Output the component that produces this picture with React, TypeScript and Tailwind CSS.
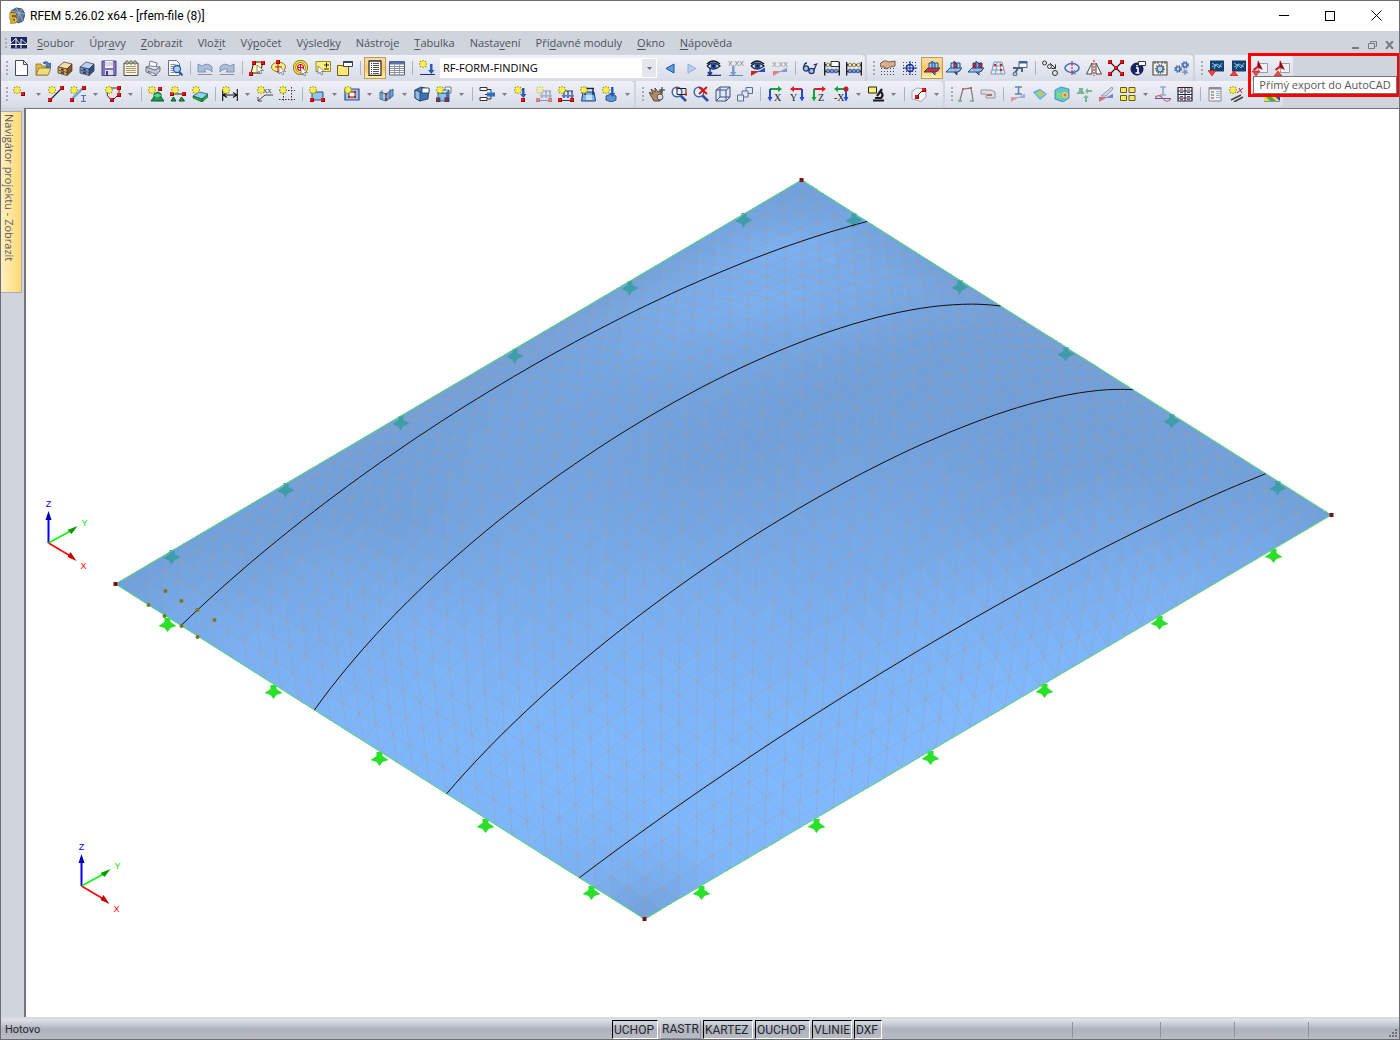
import { ReactNode } from 'react';
import clsx from 'clsx';

// ---------- small icon parts ----------

const Star = ({ x = 0, y = 0 }: { x?: number; y?: number }) => (
  <g transform={`translate(${x} ${y})`}>
    <path d="M4 0v8M0 4h8M1 1l6 6M7 1L1 7" stroke="#a89a10" strokeWidth="1.300" />
    <path d="M4 1v6M1 4h6M2 2l4 4M6 2L2 6" stroke="#fbf344" strokeWidth="1.500" />
  </g>
);

const Dot = ({ x, y, c = '#f01010' }: { x: number; y: number; c?: string }) => (
  <g>
    <rect x={x} y={y} width="4" height="4" fill="#8c0808" />
    <rect x={x} y={y} width="3" height="3" fill={c} />
  </g>
);

const Down = ({ x = 8, y = 1, c = '#2a59b5' }: { x?: number; y?: number; c?: string }) => (
  <path d={`M${x - 1} ${y}h2.5v6h2l-3.2 4-3.2-4h2z`} fill={c} />
);

const Cursor = ({ x = 8, y = 6 }: { x?: number; y?: number }) => (
  <path d={`M${x} ${y}v8l2-2 1.5 3 1.5-1-1.5-2.5h3z`} fill="#fff" stroke="#666" strokeWidth=".7" />
);

const Lens = () => (
  <g>
    <path d="M9 9l6 6" stroke="#2f50a8" strokeWidth="2.600" />
    <circle cx="6" cy="6" r="4.800" fill="#e9f4ff" stroke="#3d63b4" strokeWidth="1.500" />
  </g>
);

const Eye = () => (
  <g>
    <path d="M1 6Q7 0 14 6Q7 12 1 6" fill="#fff" stroke="#1b2340" strokeWidth="1.300" />
    <circle cx="7.500" cy="6" r="3" fill="#22539f" />
    <circle cx="7.500" cy="6" r="1.200" fill="#05102c" />
    <path d="M1 4Q7 -2 14 4" stroke="#101522" strokeWidth="1.300" fill="none" />
  </g>
);

const Grid = () => (
  <path d="M1 2.500h14M1 5.500h14M1 8.500h14M1 11.500h14M1 14.500h14" stroke="#3c4252" strokeDasharray="1 2" />
);

const Cabinet = ({ a, b, c }: { a: string; b: string; c: string }) => (
  <g stroke="#3a3530" strokeWidth=".7">
    <path d="M1 7l6-5 8 2-5 5z" fill={a} />
    <path d="M10 9l5-5v7l-5 4.500z" fill={c} />
    <path d="M1 7l9 2v6.500L1 13z" fill={b} />
    <path d="M1 10l9 2.500" />
    <path d="M4 9.300l3 .8M4 12.500l3 .8" strokeWidth="1.500" />
  </g>
);

// three crossed work planes, the chosen one is red
const Planes = ({ on }: { on: number }) => (
  <g strokeWidth=".9" stroke="#123f7a">
    <path d="M5 3h9v8H5z" fill={on === 2 ? '#f01616' : '#a5d4f7'} />
    <path d="M8 1l3 3v11l-3-3z" fill={on === 1 ? '#f01616' : '#6fb4ea'} fillOpacity=".9" />
    <path d="M0 12l4-4h12l-4 4z" fill={on === 0 ? '#f01616' : '#9bcdf4'} fillOpacity=".85" />
  </g>
);

const Slope = ({ dim }: { dim?: boolean }) => (
  <g opacity={dim ? 0.5 : 1}>
    <path d="M1 11h8l-8 4.500z" fill="#e01b24" />
    <path d="M15 12H8l7-4z" fill="#2347d8" />
    <path d="M1 15.500l14-7.500" stroke="#333" strokeWidth=".5" />
  </g>
);

const Loads = () => (
  <g>
    <path d="M5 5h10M2 14.500h13" stroke="#203c7b" strokeWidth="1.200" />
    <path d="M6 5v6M10 5v6M14 5v6" stroke="#203c7b" strokeWidth="1.200" />
    <path d="M4 9l2 3 2-3M8 9l2 3 2-3M12 9l2 3 2-3" fill="none" stroke="#3f63b8" />
    <Dot x={0} y={12} />
    <Dot x={12} y={12} />
    <Star />
  </g>
);

const Abacus = ({ card }: { card?: boolean }) => (
  <g>
    <path d="M.700 2v13.500M15.300 2v13.500M1 5h14M1 11.500h14" stroke="#15161a" strokeWidth="1.300" />
    <g fill="#f2e8a4" stroke="#574f24" strokeWidth=".6">
      <circle cx="4" cy="5" r="1.800" />
      <circle cx="8" cy="5" r="1.800" />
      <circle cx="12.500" cy="5" r="1.800" />
    </g>
    <g fill="#7998df" stroke="#1f356f" strokeWidth=".6">
      <circle cx="4" cy="11" r="1.900" />
      <circle cx="8" cy="11" r="1.900" />
      <circle cx="12" cy="11" r="1.900" />
    </g>
    {card && <path d="M7 1.500h8v5H7z" fill="#fff" stroke="#333" />}
  </g>
);

const ViewAxis = ({ t, h, v, flip }: { t: string; h: string; v: string; flip?: boolean }) => (
  <g>
    {flip ? (
      <g>
        <path d="M13 3H5" stroke={h} strokeWidth="2" />
        <path d="M5 0L1 3l4 3z" fill={h} />
        <path d="M13 3v8" stroke={v} strokeWidth="2" />
        <path d="M10.500 11h5L13 15.500z" fill={v} />
      </g>
    ) : (
      <g>
        <path d="M3 3h8" stroke={h} strokeWidth="2" />
        <path d="M11 0l4 3-4 3z" fill={h} />
        <path d="M3 3v8" stroke={v} strokeWidth="2" />
        <path d="M.5 11h5L3 15.500z" fill={v} />
      </g>
    )}
    <text x={flip ? 1 : 7} y="15" fontSize="10" fontFamily="Liberation Serif, serif" fill="#222">
      {t}
    </text>
  </g>
);

const Acad = ({ up }: { up?: boolean }) => (
  <g>
    <path d="M6.500 3.500h9v9h-9z" fill="#eef0f2" stroke="#9b9ea5" />
    <path d="M6 0l5 10-5-2-4 3-1-2 4-3z" fill="#d3202a" />
    <path d="M6 1v6l4 2z" fill="#7a0f16" />
    {up ? (
      <path d="M0 16h8l-4-5z" fill="#f04a42" stroke="#8f1010" strokeWidth=".5" />
    ) : (
      <path d="M0 11h8l-4 5z" fill="#f04a42" stroke="#8f1010" strokeWidth=".5" />
    )}
  </g>
);

const Dxf = ({ up }: { up?: boolean }) => (
  <g>
    <path d="M2 .500h14v11H2z" fill="#12416f" />
    <path d="M4 3l3 2 2-1 5 3M4 7l4-2 3 3 3-5M6 9l2-4" stroke="#8fd0f8" fill="none" strokeWidth=".9" />
    {up ? (
      <path d="M0 16h8l-4-5.500z" fill="#f04038" stroke="#a31111" strokeWidth=".5" />
    ) : (
      <path d="M0 10.500h8L4 16z" fill="#f04038" stroke="#a31111" strokeWidth=".5" />
    )}
  </g>
);

const Gear = ({ x, y, r, c }: { x: number; y: number; r: number; c: string }) => (
  <g>
    <circle cx={x} cy={y} r={r} fill="none" stroke={c} strokeWidth="1.600" strokeDasharray="1.400 1" />
    <circle cx={x} cy={y} r={r - 1} fill="#c3d4f2" stroke={c} strokeWidth="1.200" />
  </g>
);

// ---------- icons ----------

const icons: Record<string, ReactNode> = {
  novy: <path d="M2.500.500h8l4 4v11h-12z M10.500.500v4h4" fill="#fff" stroke="#454a5a" />,
  otevrit: (
    <g stroke="#857124" strokeWidth=".8">
      <path d="M1 4h5l1 2h6v9H1z" fill="#d8bb48" />
      <path d="M4 8h12l-3 7H1z" fill="#f0dc7c" />
      <path d="M8 3q4-3 6 1l1.500-1v4.500H11l1.500-1.500Q11 3 8 3" fill="#4e83c4" stroke="#234d86" />
    </g>
  ),
  skrin: <Cabinet a="#fbdca8" b="#e3a954" c="#83561f" />,
  skrinModra: <Cabinet a="#b9d1fa" b="#6f97e6" c="#2b4d98" />,
  ulozit: (
    <g>
      <path d="M1 1h14v14.500H1z" fill="#7d76b8" stroke="#4a4485" />
      <path d="M4 1h8v7H4z" fill="#f2f3fb" />
      <path d="M4 3h8M4 5h8" stroke="#b9bacf" />
      <path d="M4 10h8v5H4z" fill="#dcdcea" />
      <path d="M5 11h2v4H5z" fill="#413b78" />
    </g>
  ),
  protokol: (
    <g>
      <path d="M1 3h14v12.500H1z" fill="#f8f3da" stroke="#4c4734" />
      <path d="M3 1h2v3H3zM7 1h2v3H7zM11 1h2v3h-2z" fill="#fff" stroke="#4c4734" strokeWidth=".8" />
      <path d="M3 6.500h10M3 8.500h10M3 10.500h10M3 12.500h10" stroke="#a29a7c" />
    </g>
  ),
  tisk: (
    <g stroke="#5a6072" strokeWidth=".8">
      <path d="M4 7l1-6 7 2-1 5z" fill="#fff" />
      <path d="M1 7l9 3 5-3v4l-5 4.500L1 12z" fill="#c0c5dc" />
      <path d="M1 7l4-1 10 1-5 3z" fill="#e8eaf5" />
      <path d="M3 11l6 2.500 3 1.500-5 .5z" fill="#fff" />
    </g>
  ),
  nahled: (
    <g>
      <path d="M1.500.500h8l3 3v12h-11z" fill="#f7f8fb" stroke="#6c7283" />
      <path d="M3.500 4.500h5M3.500 6.500h4M3.500 8.500h3M3.500 10.500h3M3.500 12.500h4" stroke="#8990a3" />
      <circle cx="10" cy="9" r="3.500" fill="#a9d3f5" stroke="#27589e" strokeWidth="1.300" />
      <path d="M12.500 12l3 3.500" stroke="#27589e" strokeWidth="2" />
    </g>
  ),
  zpet: (
    <g>
      <path d="M5 6q6-4 10 1v5q-4-5-8-2l2 2H1V4z" fill="#aebfdb" stroke="#6f84ad" strokeWidth=".8" />
      <path d="M1 14.500h14" stroke="#8a93a6" />
    </g>
  ),
  znovu: (
    <g>
      <path d="M11 6Q5 2 1 7v5q4-5 8-2l-2 2h8V4z" fill="#aebfdb" stroke="#6f84ad" strokeWidth=".8" />
      <path d="M1 14.500h14" stroke="#8a93a6" />
    </g>
  ),
  vyberPlocha: (
    <g>
      <path d="M5 2h9l-3 11H2z" fill="#fff9b5" stroke="#222" />
      <Dot x={3} y={1} />
      <Dot x={12} y={1} />
      <Dot x={0} y={12} />
      <Cursor x={8} y={5} />
    </g>
  ),
  vyberElipsa: (
    <g>
      <ellipse cx="7.500" cy="7" rx="7" ry="4.800" fill="#fff08a" stroke="#8a7a1b" />
      <path d="M7 1v12M4 7h7" stroke="#e00000" />
      <Dot x={5} y={0} />
      <Cursor x={8} y={6} />
    </g>
  ),
  vyberKruh: (
    <g>
      <circle cx="7.500" cy="7.500" r="6" fill="#fff" stroke="#4a4208" strokeWidth="3" />
      <circle cx="7.500" cy="7.500" r="6" fill="none" stroke="#f6d629" strokeWidth="2" />
      <circle cx="7.500" cy="7.500" r="3" fill="#fff" stroke="#e00000" strokeWidth="1.100" />
      <path d="M7.500 5v5M5 7.500h5" stroke="#e00000" />
      <Cursor x={8} y={7} />
    </g>
  ),
  vyberPlusMinus: (
    <g>
      <path d="M1 1.500h14.500v10H1z" fill="#fff27c" stroke="#9a8b31" />
      <path d="M9 5h5M11.500 2.500v5M9 9h5" stroke="#222" />
      <Cursor x={3} y={6} />
    </g>
  ),
  vyberOkno: (
    <g>
      <path d="M.500 5.500h11v10H.500z" fill="#fbe774" stroke="#706118" />
      <path d="M6.500 1.500h9v5h-9z" fill="#fff" stroke="#39405b" />
      <path d="M6.500 2h9" stroke="#39405b" strokeWidth="2" />
    </g>
  ),
  navigator: (
    <g>
      <path d="M2 1h12v14.500H2z" fill="#fff" stroke="#333" strokeWidth="1.300" />
      <path d="M6 3.500h6M6 5.500h6M6 7.500h6M6 9.500h6M6 11.500h6M6 13.500h6" stroke="#555" />
      <path d="M4 3.500h1M4 5.500h1M4 7.500h1M4 9.500h1M4 11.500h1M4 13.500h1" stroke="#333" />
    </g>
  ),
  tabulky: (
    <g>
      <path d="M.500 1.500h15v13.500H.500z" fill="#fff" stroke="#555b6e" />
      <path d="M1 3h14" stroke="#5871ac" strokeWidth="3" />
      <path d="M1 6.500h14M1 8.500h14M1 10.500h14M1 12.500h14M5.500 5v10M10.500 5v10" stroke="#8f94a2" />
    </g>
  ),
  novyZs: (
    <g>
      <Star />
      <path d="M1 14.500h15" stroke="#1c2f6a" />
      <Down x={12} y={4} />
    </g>
  ),
  vlevo: <path d="M12 4v9L4 8.500z" fill="#5f9cf0" stroke="#22509c" />,
  vpravo: <path d="M4 4v9l8-4.500z" fill="#b9cdee" stroke="#93abd4" />,
  okoZatizeni: (
    <g>
      <path d="M4 7v7M2 12l2 3 2-3M1 15.500h14" stroke="#173a86" strokeWidth="1.400" fill="none" />
      <Eye />
    </g>
  ),
  hodnotyZat: (
    <g opacity=".55">
      <text x="0" y="6" fontSize="7" fontFamily="Liberation Sans, sans-serif" fill="#111">
        X.XX
      </text>
      <Down x={5} y={6} />
      <path d="M1 15.500h14" stroke="#173a86" />
    </g>
  ),
  okoVysledky: (
    <g>
      <Slope />
      <Eye />
    </g>
  ),
  hodnotyVys: (
    <g>
      <text x="0" y="7" fontSize="7" fontFamily="Liberation Sans, sans-serif" fill="#888">
        X.XX
      </text>
      <Slope dim />
    </g>
  ),
  bryle: (
    <g fill="none" stroke="#20336b" strokeWidth="1.300">
      <circle cx="4" cy="8.500" r="2.600" fill="#a9c3ee" />
      <circle cx="9.500" cy="11" r="2.600" fill="#a9c3ee" />
      <path d="M2 7q0-4 3-4M12 10l2.500-6-3 1" />
    </g>
  ),
  pocitadloKarta: <Abacus card />,
  pocitadlo: <Abacus />,
  rastrRuka: (
    <g>
      <Grid />
      <path d="M0 4q4-5 9-2l6-1v5l-5 1-4 2-1-2-4 0z" fill="#d8b08e" stroke="#5c4330" strokeWidth=".8" />
    </g>
  ),
  rastrUchop: (
    <g>
      <Grid />
      <circle cx="8" cy="8" r="3.500" fill="none" stroke="#16319c" strokeWidth="1.500" />
      <path d="M8 1v14M1 8h14" stroke="#16319c" />
    </g>
  ),
  rovinaXY: <Planes on={0} />,
  rovinaYZ: <Planes on={1} />,
  rovinaXZ: <Planes on={2} />,
  rastrRovina: (
    <g fill="none" stroke="#7f99b8">
      <path d="M4 2l-3 12h14L12 2z" fill="#e6eff8" />
      <path d="M7 2L5.500 14M10 2l1 12M3 6h10M2 10h12" />
      <path d="M4 4h2v2H4zM10 4h2v2h-2zM10 9h2v2h-2z" fill="#e01818" stroke="none" />
    </g>
  ),
  pudorys: (
    <g stroke="#4d6280" fill="none">
      <path d="M2 15l4-7M1 8h9v4" strokeWidth="2" />
      <path d="M7 1.500h8v6H7z" fill="#fff" />
      <path d="M7 2.500h8" strokeWidth="2" />
      <circle cx="3" cy="14" r="2" fill="#aac7e6" />
    </g>
  ),
  posun: (
    <g fill="none" stroke="#333">
      <circle cx="2.500" cy="3" r="2" />
      <circle cx="7.500" cy="6.500" r="2" />
      <circle cx="13" cy="13" r="2.500" />
      <path d="M8 3l5 5M13.500 4.500v4h-4" />
    </g>
  ),
  otoceni: (
    <g fill="none">
      <ellipse cx="8" cy="8" rx="7" ry="4.500" stroke="#4676b8" strokeWidth="1.600" />
      <path d="M8 1v14" stroke="#e00000" strokeDasharray="2 1" />
      <path d="M11 10l-3 3 4 1" stroke="#4676b8" />
    </g>
  ),
  zrcadleni: (
    <g fill="#fff" stroke="#444">
      <path d="M.500 14L6 3v11zM15.500 14L10 3v11z" />
      <path d="M8 0v16" stroke="#e00000" strokeDasharray="2 1" />
    </g>
  ),
  spojit: (
    <g>
      <path d="M2 2l12 12M14 2L2 14" stroke="#222" strokeWidth="1.200" />
      <Dot x={0} y={0} />
      <Dot x={12} y={0} />
      <Dot x={0} y={12} />
      <Dot x={12} y={12} />
      <Dot x={6} y={6} />
    </g>
  ),
  info: (
    <g>
      <circle cx="7" cy="9" r="6" fill="#18236c" stroke="#0b1140" />
      <path d="M6 8h2v5M5.500 13h4M7 5v1.500" stroke="#fff" strokeWidth="1.600" fill="none" />
      <path d="M8.500 1.500h7v4h-7z" fill="#fff" stroke="#333" />
    </g>
  ),
  nastaveni: (
    <g>
      <path d="M1 2h14v13H1z" fill="#fff6cf" stroke="#4a4f60" strokeWidth="1.200" />
      <path d="M3 1v3M6 1v3M10 1v3M13 1v3" stroke="#4a4f60" />
      <Gear x={8} y={9} r={4} c="#375a94" />
    </g>
  ),
  kola: (
    <g>
      <Gear x={4} y={9} r={3} c="#3f62a6" />
      <Gear x={11} y={5} r={3} c="#3f62a6" />
      <Gear x={11} y={12} r={2} c="#6f8cc4" />
    </g>
  ),
  dxfImport: <Dxf />,
  dxfExport: <Dxf up />,
  acadImport: <Acad />,
  acadExport: <Acad up />,

  uzel: (
    <g>
      <Star />
      <Dot x={8} y={6} />
    </g>
  ),
  linie: (
    <g>
      <path d="M2 14L14 2" stroke="#222" strokeWidth="1.100" />
      <Dot x={0} y={12} />
      <Dot x={12} y={0} />
      <Star />
    </g>
  ),
  prut: (
    <g>
      <path d="M1 14L13 2" stroke="#79a8de" strokeWidth="2.500" />
      <Dot x={0} y={12} />
      <Dot x={12} y={0} />
      <Star />
      <path d="M11 9.500h5M13.500 9.500v6M11 15.500h5" stroke="#5a70ac" strokeWidth="1.200" />
    </g>
  ),
  lomena: (
    <g>
      <path d="M6 14L2 9l3-7h9v6l-6 6" stroke="#333" fill="none" />
      <Dot x={12} y={0} />
      <Dot x={12} y={7} />
      <Dot x={5} y={12} />
      <Star />
    </g>
  ),
  podpora: (
    <g>
      <path d="M6 8l4-2 3 2v3l3 4H3l3-4z" fill="#1f9a4c" stroke="#075a26" />
      <path d="M5 9.500l4.500-2 4 2-4 2z" fill="#64d588" />
      <Dot x={10} y={1} />
      <Star />
    </g>
  ),
  podporyLinie: (
    <g>
      <path d="M2 8h12" stroke="#222" />
      <Dot x={0} y={6} />
      <Dot x={12} y={6} />
      <path d="M1 15l2.500-4L6 15zM9 15l2.500-4 3 4z" fill="#1f9a4c" stroke="#075a26" />
      <Star x={1} />
    </g>
  ),
  podporaPlocha: (
    <g>
      <path d="M1 10l6-4 9 2-6 5z" fill="#8fd0f2" stroke="#1d5a80" strokeWidth=".8" />
      <path d="M1 10v2l9 4v-3zM10 16l6-5V8l-6 5z" fill="#25a956" stroke="#075a26" strokeWidth=".6" />
      <Star />
    </g>
  ),
  kota: (
    <g>
      <path d="M.700 3v12M15.300 3v12M1 9h14M5 6.500L1 9l4 2.500M11 6.500L15 9l-4 2.500" stroke="#111" strokeWidth="1.100" fill="none" />
      <Star />
    </g>
  ),
  kotaXX: (
    <g>
      <path d="M1 15l7-6h8M1 15v-4M1 15h4" stroke="#444" fill="none" />
      <text x="6" y="7" fontSize="6" fontFamily="Liberation Serif, serif" fill="#222">
        XX
      </text>
      <Star />
    </g>
  ),
  vodici: (
    <g>
      <path d="M4.500 1v15M12.500 1v15M0 4.500h16M0 13.500h16" stroke="#333" strokeDasharray="1.500 1.500" />
      <Star />
    </g>
  ),
  plocha: (
    <g>
      <path d="M3 6h11v8H3z" fill="#94c4ec" stroke="#28547f" />
      <Dot x={1} y={12} />
      <Dot x={12} y={12} />
      <Star />
    </g>
  ),
  otvor: (
    <g>
      <path d="M1 3h14v11H1z" fill="#94c4ec" stroke="#28547f" strokeWidth="1.200" />
      <path d="M5 6h6v5H5z" fill="#fff" stroke="#a01515" />
      <path d="M4 5h2v2H4zM10 5h2v2h-2zM4 10h2v2H4zM10 10h2v2h-2z" fill="#e01010" />
      <Star />
    </g>
  ),
  pruseciky: (
    <g stroke="#28547f" strokeWidth=".8">
      <path d="M1 6l6 2v7l-6-2z" fill="#9ccbee" />
      <path d="M7 8l7-5v7l-7 5z" fill="#6aa9de" />
      <path d="M3 4v9M11 3v10" stroke="#35507c" />
      <path d="M6 7h2v2H6zM6 12h2v2H6z" fill="#e01010" stroke="none" />
    </g>
  ),
  teleso: (
    <g stroke="#1f3658" strokeWidth=".8">
      <path d="M1 4l6-3 8 2-1 10-8 2-5-3z" fill="#3f74b4" />
      <path d="M1 4l5 2v9l-5-3z" fill="#8fbfe8" />
      <path d="M8 2h7v5H8z" fill="#fff" />
    </g>
  ),
  kopie: (
    <g stroke="#28547f" strokeWidth=".8">
      <path d="M9 1h6v6H9z" fill="#fff" stroke="#555" />
      <path d="M2 7h9v8H2z" fill="#8cc1ee" />
      <path d="M2 7l3-3h8l-2 3z" fill="#c9e6fa" />
      <path d="M11 7l2-3v8l-2 3z" fill="#4f87c0" />
      <Dot x={0} y={12} />
      <Dot x={9} y={12} />
      <Star />
    </g>
  ),
  zatizeniPostup: (
    <g>
      <path d="M1 1.500h7v3H1zM1 11.500h7v3H1z" fill="#fff" stroke="#333" />
      <path d="M8 3.500h4v3M8 13h4v-3" stroke="#333" />
      <path d="M8 6.500h8v4H8z" fill="#2c70c4" />
      <path d="M6 8.500h2" stroke="#333" />
    </g>
  ),
  zatUzel: (
    <g>
      <Star />
      <Down x={9} y={2} />
      <Dot x={7} y={12} />
    </g>
  ),
  zatPrut: (
    <g opacity=".45">
      <Loads />
    </g>
  ),
  zatLinie: <Loads />,
  zatPlocha: (
    <g>
      <path d="M3 6h11l1.500 9H1.500z" fill="#7db4e6" stroke="#203c7b" />
      <path d="M3 2.500h11M5 2v7M13 2v7" stroke="#142a5c" strokeWidth="1.400" />
      <path d="M6 9h6v5H6z" fill="#c5e0f8" />
      <Star />
    </g>
  ),
  zatTeleso: (
    <g>
      <path d="M4 10l5-2 5 2v4l-5 2-5-2z" fill="#5a97d4" stroke="#203c7b" strokeWidth=".8" />
      <Down x={10} y={1} />
      <Star />
    </g>
  ),
  ruka: (
    <g>
      <path d="M5 15L2 10 0 6l4 2-2-5 4 3V2l3 4 3-1v5l-1 5z" fill="#b08c69" stroke="#3d3022" strokeWidth=".8" />
      <path d="M13 1v7M10 4h6" stroke="#222" />
      <circle cx="11" cy="11" r="3" fill="#d5d8df" stroke="#555" />
    </g>
  ),
  zoom: (
    <g>
      <Lens />
      <path d="M6 2.500h9v6H6z" fill="none" stroke="#222" />
      <path d="M5 1.500h2v2H5zM14 7.500h2v2h-2z" fill="#e01010" />
    </g>
  ),
  zoomVse: (
    <g>
      <Lens />
      <path d="M6 1l8 7M14 1L6 8" stroke="#dc1212" strokeWidth="2" />
    </g>
  ),
  kvadr: (
    <g fill="none" stroke="#3d4e7c">
      <path d="M1 4l4-3h10v10l-4 4H1z" fill="#dfe7f6" />
      <path d="M1 4h10v11M11 4l4-3M5 1v10h10M5 11l-4 4" />
    </g>
  ),
  kvadry: (
    <g fill="#dfe7f6" stroke="#5f6d94">
      <path d="M9 1.500h6.500v6H9z" />
      <path d="M5 5h6v6H5z" />
      <path d="M.500 9h6v6h-6z" />
    </g>
  ),
  pohledX: <ViewAxis t="X" h="#12a33a" v="#2549d6" />,
  pohledY: <ViewAxis t="Y" h="#d81f2a" v="#2549d6" flip />,
  pohledZ: <ViewAxis t="Z" h="#d81f2a" v="#12a33a" />,
  pohledMinusX: (
    <g>
      <ViewAxis t="-X" h="#12a33a" v="#2549d6" flip />
      <circle cx="13" cy="3" r="2.500" fill="#c8161f" />
    </g>
  ),
  mikroskop: (
    <g>
      <path d="M14 3l-5 7M5 14.500h11M7 12h6q3-3 0-6" stroke="#1b1d22" strokeWidth="2.200" fill="none" />
      <path d="M.500 1h8v6h-8z" fill="#fff36a" stroke="#222" />
    </g>
  ),
  rez: (
    <g>
      <path d="M1 5l5-3 9 1v8l-5 4.500L1 13z" fill="#f3f4f7" stroke="#a4a8b3" />
      <path d="M6 10l6-6" stroke="#222" />
      <Dot x={4} y={9} />
      <Dot x={11} y={2} />
    </g>
  ),
  ram: (
    <g opacity=".7">
      <path d="M2 14L5 3l8-1 2 12" stroke="#555" strokeWidth="1.300" fill="none" />
      <path d="M0 15h4M12 15h4" stroke="#22a045" strokeWidth="1.500" />
      <path d="M4 2h2v2H4zM12 1h2v2h-2z" fill="#d02020" />
    </g>
  ),
  valec: (
    <g opacity=".7" stroke="#777" fill="#d9dbe2">
      <path d="M1 4h10l4 2v6H6V8H1z" />
      <path d="M7 9h5" stroke="#a33" strokeWidth="2" />
    </g>
  ),
  vysPrut: (
    <g opacity=".7">
      <path d="M5 1h7M8.500 1v7M5 8h7" stroke="#2f5690" strokeWidth="1.500" />
      <Slope dim />
    </g>
  ),
  vysPlocha: (
    <g opacity=".8">
      <path d="M1 6l7-3 7 5-7 6z" fill="#4b78dc" />
      <path d="M2 7l6-3 6 4-6 5z" fill="#3fc9cf" />
      <path d="M4 7l4-2 5 3-5 3z" fill="#8add4f" />
      <path d="M6 7l3-1 3 2-3 1.500z" fill="#f2a13c" />
    </g>
  ),
  vysTeleso: (
    <g opacity=".85">
      <path d="M1 4l6-3 8 2v9l-6 4-8-3z" fill="#46c0cb" stroke="#2b70a0" strokeWidth=".8" />
      <path d="M3 6l4 1v6l-4-2z" fill="#7bd84f" />
      <circle cx="11" cy="9" r="3" fill="#f1d63c" />
      <circle cx="11" cy="9" r="1.500" fill="#e6532b" />
    </g>
  ),
  reakce: (
    <g opacity=".6">
      <path d="M0 8h9L7 5V2H3v3zM9 16v-4H7l3-3 3 3h-2v4z" fill="#2f9a55" />
      <path d="M16 4h-4V2L9 5l3 3V6h4z" fill="#2f9a55" />
    </g>
  ),
  rezVysledky: (
    <g opacity=".6">
      <path d="M3 10L14 1l1 2-7 7z" fill="#c9d3e2" stroke="#4f668c" />
      <Slope />
    </g>
  ),
  okna: (
    <g fill="#f8e56a" stroke="#6a5b14">
      <path d="M.500 1.500h6v5h-6zM9 1.500h6v5H9zM.500 9.500h6v5h-6zM9 9.500h6v5H9z" />
    </g>
  ),
  deformace: (
    <g fill="none">
      <path d="M5 1h6M8 1v8M5 9h6" stroke="#7b92b8" strokeWidth="1.200" />
      <path d="M0 12.500h16" stroke="#2e5fc4" />
      <path d="M0 12q4-5 8 .500t8 0" stroke="#d55a60" strokeWidth="1.200" />
    </g>
  ),
  tabulkaVys: (
    <g>
      <path d="M1 1.500h14v13.500H1z" fill="#f6f8fd" stroke="#23263a" strokeWidth="1.200" />
      <path d="M1 5h14M1 8.500h14M1 12h14M8 1v14" stroke="#23263a" />
      <path d="M3 3h3M10 3h3M3 10.500h3M10 13.500h3" stroke="#d02a2a" />
      <path d="M3 6.500h3M10 6.500h3M10 10.500h3M3 13.500h3" stroke="#3158c8" />
    </g>
  ),
  panel: (
    <g opacity=".65">
      <path d="M2 1.500h12v13.500H2z" fill="#f7f8fb" stroke="#596072" />
      <path d="M2 2.500h12" stroke="#596072" strokeWidth="2" />
      <path d="M4 6h3M4 12h3" stroke="#d46a4a" strokeWidth="2" />
      <path d="M4 9h3" stroke="#4aa06a" strokeWidth="2" />
      <path d="M9 5.500h4M9 7.500h4M9 9.500h4M9 11.500h4" stroke="#8a90a0" />
    </g>
  ),
  hulka: (
    <g>
      <path d="M2 14l10-5M5 16l9-5" stroke="#444" strokeWidth="1.600" />
      <path d="M8 7l6-5M10 2l3 5" stroke="#b32525" />
      <Star />
    </g>
  ),
  barvy: (
    <g>
      <path d="M0 0h16v15.500H0z" fill="#2340d8" />
      <path d="M0 15V0l16 15z" fill="#e9e02c" />
      <path d="M0 4l12 11H6L0 9z" fill="#38b54a" />
      <path d="M5 0h5l6 6v5z" fill="#f08a24" />
    </g>
  ),
};

// '|' separator, 'v' drop-down arrow, '*' pressed button
const mainBar = 'novy otevrit skrin skrinModra ulozit protokol tisk nahled | zpet znovu | vyberPlocha vyberElipsa vyberKruh vyberPlusMinus vyberOkno | *navigator tabulky | novyZs';
const caseBar = 'vlevo vpravo okoZatizeni hodnotyZat okoVysledky hodnotyVys | bryle pocitadloKarta pocitadlo';
const planeBar = 'rastrRuka rastrUchop *rovinaXY rovinaYZ rovinaXZ rastrRovina pudorys | posun otoceni zrcadleni spojit info nastaveni kola';
const exportBar = 'dxfImport dxfExport acadImport acadExport';
const insertBar = 'uzel v linie prut v lomena v | podpora podporyLinie podporaPlocha | kota v kotaXX vodici | plocha v otvor v pruseciky v teleso kopie v | zatizeniPostup v zatUzel zatPrut zatLinie zatPlocha zatTeleso v';
const viewBar = 'ruka zoom zoomVse kvadr kvadry | pohledX pohledY pohledZ pohledMinusX v mikroskop v | rez v';
const resultBar = 'ram valec | vysPrut vysPlocha vysTeleso reakce rezVysledky okna v deformace tabulkaVys | panel hulka v barvy';

function Tools({ items }: { items: string }) {
  return (
    <>
      {items.split(' ').map((item, i) => {
        if (item === '|') {
          return (
            <span key={i} className="flex w-2 shrink-0 justify-center">
              <span className="h-[14px] w-px bg-[#aeb3c0]" />
            </span>
          );
        }
        if (item === 'v') {
          return (
            <button key={i} aria-label="Další možnosti" className="flex w-[13px] shrink-0 justify-center">
              <svg width="5" height="3" viewBox="0 0 5 3">
                <path d="M0 0h5L2.500 3z" fill="#7a7e88" />
              </svg>
            </button>
          );
        }
        const pressed = item.startsWith('*');
        const name = pressed ? item.slice(1) : item;
        return (
          <button
            key={i}
            aria-label={name}
            className={clsx(
              'flex h-[22px] w-[22px] shrink-0 items-center justify-center',
              pressed && 'border border-[#c29a52] bg-gradient-to-b from-[#fcdcae] via-[#ffc860] to-[#fff0a8]'
            )}
          >
            <svg width="16" height="16" viewBox="0 0 16 16" fill="none" className="shrink-0">
              {icons[name]}
            </svg>
          </button>
        );
      })}
    </>
  );
}

function Toolbar({ children }: { children: ReactNode }) {
  return (
    <div className="flex h-[26px] shrink-0 items-center rounded-r-sm bg-gradient-to-b from-[#eff1f7] to-[#d8dce7]">
      <span className="flex w-[10px] shrink-0 flex-col items-center gap-[2px] pl-1">
        {[0, 1, 2, 3].map((n) => (
          <span key={n} className="h-[2px] w-[2px] bg-[#a7acb9]" />
        ))}
      </span>
      {children}
    </div>
  );
}

// ---------- title and menu ----------

const menu = [
  ['', 'S', 'oubor'],
  ['Úpr', 'a', 'vy'],
  ['', 'Z', 'obrazit'],
  ['Vlož', 'i', 't'],
  ['Vý', 'p', 'očet'],
  ['Výsled', 'k', 'y'],
  ['Nástro', 'j', 'e'],
  ['', 'T', 'abulka'],
  ['Nasta', 'v', 'ení'],
  ['Pří', 'd', 'avné moduly'],
  ['', 'O', 'kno'],
  ['', 'N', 'ápověda'],
];

function TitleBar() {
  return (
    <header className="flex h-[31px] shrink-0 items-center bg-white pl-2 pr-px">
      <svg width="17" height="17" viewBox="0 0 17 17">
        <path d="M3 4l5-3 6 1 3 5-2 7-5 2-5-4z" fill="#5f7690" stroke="#3d5167" />
        <path d="M8 1l3 5-2 9M3 4l8 2 6 1M14 2l-3 4 4 8" stroke="#a9bdd0" fill="none" strokeWidth=".8" />
        <path d="M8 7H3v4h3q2 0 2 2t-2 2H2" stroke="#6e5200" strokeWidth="2.800" fill="none" />
        <path d="M8 7H3v4h3q2 0 2 2t-2 2H2" stroke="#f8c928" strokeWidth="1.600" fill="none" />
      </svg>
      <h1 className="pl-[5px] font-['Roboto',sans-serif] text-[12px] leading-4 text-black">
        RFEM 5.26.02 x64 - [rfem-file (8)]
      </h1>
      <div className="ml-auto flex h-full">
        <button aria-label="Minimalizovat" className="flex w-[46px] items-center justify-center">
          <span className="h-px w-[10px] bg-black" />
        </button>
        <button aria-label="Maximalizovat" className="flex w-[46px] items-center justify-center">
          <span className="h-[10px] w-[10px] border border-black" />
        </button>
        <button aria-label="Zavřít" className="flex w-[46px] items-center justify-center">
          <svg width="11" height="11" viewBox="0 0 11 11">
            <path d="M.500.500l10 10M10.500.500l-10 10" stroke="#000" />
          </svg>
        </button>
      </div>
    </header>
  );
}

function MenuBar() {
  return (
    <nav className="flex h-6 shrink-0 items-center bg-[#d0d4dd] pl-[5px] text-[11px] leading-4 text-[#4d525d]">
      <span className="mr-1 flex flex-col gap-[2px]">
        {[0, 1, 2].map((n) => (
          <span key={n} className="h-[2px] w-[2px] bg-[#a7acb9]" />
        ))}
      </span>
      <svg width="16" height="12" viewBox="0 0 16 12" className="mr-[10px]">
        <path d="M0 0h16v12H0z" fill="#1d2560" />
        <path d="M0 7.500h16M5 1v11M10 2v10" stroke="#fff" fill="none" />
        <path d="M5 1L0 6M10 2l6 5M5 2l4 5" stroke="#fff" fill="none" strokeWidth=".8" />
        <path d="M0 11.500h16" stroke="#7f86b4" />
      </svg>
      <ul className="flex gap-[15px]">
        {menu.map(([a, key, b]) => (
          <li key={b + key}>
            <button className="whitespace-nowrap">
              {a}
              <u className="underline-offset-2">{key}</u>
              {b}
            </button>
          </li>
        ))}
      </ul>
      <div className="ml-auto flex items-end gap-2 pr-[6px] pt-1">
        <button aria-label="Minimalizovat dokument">
          <svg width="8" height="8" viewBox="0 0 8 8">
            <path d="M0 7h7" stroke="#777b85" strokeWidth="2" />
          </svg>
        </button>
        <button aria-label="Obnovit dokument">
          <svg width="9" height="8" viewBox="0 0 9 8">
            <path d="M2.500 3V.500h6v5H7M.500 2.500h6v5h-6z" stroke="#777b85" fill="none" />
          </svg>
        </button>
        <button aria-label="Zavřít dokument">
          <svg width="9" height="8" viewBox="0 0 9 8">
            <path d="M1 0l7 8M8 0L1 8" stroke="#777b85" strokeWidth="2" />
          </svg>
        </button>
      </div>
    </nav>
  );
}

// ---------- membrane model ----------

const NU = 32;
const NV = 40;

type Point = [number, number];

// screen position of surface point u, v (both 0..1)
function project(u: number, v: number): Point {
  const rise = 16 * u * (1 - u) * v * (1 - v);
  const su = u + 0.06 * (2 * u - 1) * rise;
  const sv = v + 0.07 * (2 * v - 1) * rise;
  return [115 + 529 * su + 686 * sv, 584 + 335 * su - 404 * sv - 93 * rise];
}

const rows = [0, 0.125, 0.25, 0.5, 0.75, 0.875, 1];
const cols = [0, 0.125, 0.25, 0.5, 0.75, 0.875, 1];
const light = [
  [0.1, 0.12, 0.1, 0.1, 0.15, 0.25, 0.1],
  [0.5, 0.2, 0.05, 0.15, 0.5, 0.7, 0.25],
  [0.72, 0.45, 0.12, 0.25, 0.65, 0.5, 0.15],
  [0.9, 0.8, 0.5, 0.08, 0.03, 0.03, 0.1],
  [0.9, 0.95, 0.85, 0.45, 0.1, 0.03, 0.1],
  [0.7, 0.92, 0.92, 0.78, 0.42, 0.2, 0.1],
  [0.1, 0.9, 1, 1, 0.8, 0.5, 0.1],
];

function locate(stops: number[], t: number): [number, number] {
  let i = 0;
  while (i < stops.length - 2 && t > stops[i + 1]) i++;
  const f = (t - stops[i]) / (stops[i + 1] - stops[i]);
  return [i, f * f * (3 - 2 * f) * 0.5 + f * 0.5];
}

function shade(u: number, v: number) {
  const [r, fr] = locate(rows, u);
  const [c, fc] = locate(cols, v);
  const top = light[r][c] * (1 - fc) + light[r][c + 1] * fc;
  const bottom = light[r + 1][c] * (1 - fc) + light[r + 1][c + 1] * fc;
  const b = top * (1 - fr) + bottom * fr;
  return `rgb(${Math.round(111 + 17 * b)} ${Math.round(158 + 27 * b)} ${Math.round(216 + 39 * b)})`;
}

const fmt = (p: Point) => `${p[0].toFixed(1)} ${p[1].toFixed(1)}`;

const facets: { d: string; fill: string }[] = [];
const wires: string[] = [];
for (let i = 0; i <= NU; i++) {
  for (let j = 0; j <= NV; j++) {
    const a = project(i / NU, j / NV);
    if (i < NU) wires.push(`M${fmt(a)}L${fmt(project((i + 1) / NU, j / NV))}`);
    if (j < NV) wires.push(`M${fmt(a)}L${fmt(project(i / NU, (j + 1) / NV))}`);
    if (i < NU && j < NV) {
      const b = project((i + 1) / NU, j / NV);
      const c = project(i / NU, (j + 1) / NV);
      const d = project((i + 1) / NU, (j + 1) / NV);
      wires.push(`M${fmt(c)}L${fmt(b)}`);
      facets.push({ d: `M${fmt(a)}L${fmt(b)}L${fmt(c)}z`, fill: shade((i + 0.1) / NU, (j + 0.1) / NV) });
      facets.push({ d: `M${fmt(b)}L${fmt(d)}L${fmt(c)}z`, fill: shade((i + 0.9) / NU, (j + 0.9) / NV) });
    }
  }
}

const sections = [0.124, 0.376, 0.626, 0.877].map(
  (u) => 'M' + Array.from({ length: 61 }, (_, n) => fmt(project(u, n / 60))).join('L')
);

const frontSupports: Point[] = [
  [167, 625], [273, 692], [379, 759], [485, 826], [591, 893],
  [701, 893], [816, 826], [930, 758], [1044, 691], [1159, 623], [1273, 556],
];
const backSupports: Point[] = [
  [171, 557], [285, 490], [400, 423], [514, 356], [629, 288], [743, 220],
  [853, 220], [959, 287], [1065, 354], [1171, 421], [1277, 488],
];
const gridPoints: Point[] = [
  [148, 605], [164, 616], [181, 626], [197, 637], [165, 591], [181, 601], [197, 610], [214, 620],
];
const corners: Point[] = [[115, 584], [801, 180], [1331, 515], [644, 919]];

function Axes({ x, y }: { x: number; y: number }) {
  return (
    <g transform={`translate(${x} ${y})`} fontSize="9" fontFamily="Liberation Sans, sans-serif" textAnchor="middle">
      <path d="M0 0v-24" stroke="#0000ff" strokeWidth="2" />
      <path d="M-3-23L0-32l3 9z" fill="#0000b4" />
      <path d="M0 0l22-12" stroke="#00ff00" strokeWidth="1.500" />
      <path d="M19-13l10-4-6 8z" fill="#009a00" />
      <path d="M0 0l22 13" stroke="#ff0000" strokeWidth="1.500" />
      <path d="M22 9l6 9-9-4z" fill="#c40000" />
      <text x="0" y="-36" fill="#0000ff">Z</text>
      <text x="36" y="-17" fill="#00e000">Y</text>
      <text x="35" y="26" fill="#ff0000">X</text>
    </g>
  );
}

function ModelView() {
  return (
    <svg viewBox="26 109 1372 908" className="block h-full w-full" role="img" aria-label="Model">
      <g shapeRendering="crispEdges">
        {facets.map((f, i) => (
          <path key={i} d={f.d} fill={f.fill} stroke={f.fill} strokeWidth=".6" />
        ))}
      </g>
      <path d={wires.join('')} fill="none" stroke="#a19ca3" strokeWidth=".9" strokeDasharray="1.500 .8" opacity=".75" />
      {backSupports.map(([x, y]) => (
        <path key={x} d={`M${x - 2} ${y - 7}h5v4l6 3-7 4-2 4-2-4-6-3 6-4z`} fill="#3f9da9" />
      ))}
      {frontSupports.map(([x, y]) => (
        <path key={x} d={`M${x - 3} ${y - 7}h6v4l6 4-6 2-3 4-3-4-6-2 6-4z`} fill="#2be02b" />
      ))}
      <path d="M115 584L801 180L1331 515L644 919z" fill="none" stroke="#52e07c" />
      {sections.map((d) => (
        <path key={d} d={d} fill="none" stroke="#0a0f1a" strokeWidth="1" />
      ))}
      {gridPoints.map(([x, y]) => (
        <circle key={`${x}-${y}`} cx={x} cy={y} r="2" fill="#77761c" />
      ))}
      {corners.map(([x, y]) => (
        <rect key={x} x={x - 2} y={y - 2} width="4" height="4" fill="#7c1414" />
      ))}
      <Axes x={48} y={543} />
      <Axes x={81} y={886} />
    </svg>
  );
}

// ---------- status bar ----------

const snaps = [
  { label: 'UCHOP', width: 'w-[46px]' },
  { label: 'RASTR', width: 'w-[41px]', raised: true },
  { label: 'KARTEZ', width: 'w-[50px]' },
  { label: 'OUCHOP', width: 'w-[55px]' },
  { label: 'VLINIE', width: 'w-10' },
  { label: 'DXF', width: 'w-7' },
];

function StatusBar() {
  return (
    <footer className="flex h-[21px] shrink-0 items-center bg-gradient-to-b from-[#e2e4ea] via-[#aeb2bc] to-[#bbbec6] font-['Roboto',sans-serif] text-[12px] leading-4 text-[#26282e]">
      <span className="flex-1 pl-[5px] pt-px text-[11px]">Hotovo</span>
      <div className="flex gap-[2px]">
        {snaps.map((s) => (
          <button
            key={s.label}
            className={clsx(
              'h-[19px] border pl-px text-left leading-4 whitespace-nowrap',
              s.width,
              s.raised ? 'border-[#d5d7dc] border-b-[#8e9199] border-r-[#8e9199] pb-1' : 'border-white border-l-black border-t-black'
            )}
          >
            {s.label}
          </button>
        ))}
      </div>
      <div className="flex h-4 w-[518px] justify-end">
        <span className="w-[88px] border-l border-[#8f939c]" />
        <span className="w-[74px] border-l border-[#8f939c]" />
        <span className="w-[74px] border-l border-[#8f939c]" />
        <span className="flex w-[92px] items-end justify-end border-l border-[#8f939c] pr-[2px]">
          <svg width="9" height="9" viewBox="0 0 9 9">
            <path d="M6 0h2v2H6zM3 3h2v2H3zM6 3h2v2H6zM0 6h2v2H0zM3 6h2v2H3zM6 6h2v2H6z" fill="#6d717b" />
          </svg>
        </span>
      </div>
    </footer>
  );
}

export default function App() {
  return (
    <div className="relative flex h-screen flex-col overflow-hidden bg-[#d0d4dd] font-['Open_Sans',sans-serif]">
      <TitleBar />
      <MenuBar />

      <div className="flex h-[26px] shrink-0 gap-[2px]">
        <Toolbar>
          <Tools items={mainBar} />
          <span className="relative mx-[2px] flex h-5 w-[217px] shrink-0">
            <select
              aria-label="Zatěžovací stav"
              className="w-full appearance-none bg-white pl-[3px] text-[11px] leading-5 text-black"
            >
              <option>RF-FORM-FINDING</option>
            </select>
            <span className="pointer-events-none absolute inset-y-px right-px flex w-[14px] items-center justify-center bg-[#e3e6ed]">
              <svg width="5" height="3" viewBox="0 0 5 3">
                <path d="M0 0h5L2.500 3z" fill="#6b6f79" />
              </svg>
            </span>
          </span>
          <Tools items={caseBar} />
        </Toolbar>
        <Toolbar>
          <Tools items={planeBar} />
        </Toolbar>
        <Toolbar>
          <Tools items={exportBar} />
        </Toolbar>
      </div>
      <div className="flex h-[27px] shrink-0 gap-[2px]">
        <Toolbar>
          <Tools items={insertBar} />
        </Toolbar>
        <Toolbar>
          <Tools items={viewBar} />
        </Toolbar>
        <Toolbar>
          <Tools items={resultBar} />
        </Toolbar>
      </div>

      <main className="flex min-h-0 flex-1 pr-px">
        <aside className="w-6 shrink-0 pt-[3px]">
          <button className="flex h-[182px] w-[22px] items-center justify-start border border-l-0 border-[#a9adb8] bg-gradient-to-r from-[#fff1c4] to-[#ffd96e] pt-[2px] pr-1 text-[11px] leading-4 text-[#5d5f68] [writing-mode:vertical-rl]">
            Navigátor projektu - Zobrazit
          </button>
        </aside>
        <section className="min-w-0 flex-1 border-l-2 border-t border-[#73757b] bg-white">
          <ModelView />
        </section>
      </main>
      <div className="h-[2px] shrink-0 bg-[#d9dbe0]" />
      <StatusBar />

      <div className="absolute right-0 top-[53px] h-11 w-[152px] border-[3px] border-[#ff0000]">
        <div
          role="tooltip"
          className="absolute bottom-0 left-[2px] right-0 h-[18px] border border-[#767676] bg-white text-center text-[11px] leading-4 whitespace-nowrap text-[#575757]"
        >
          Přímý export do AutoCAD
        </div>
      </div>
      <div className="pointer-events-none absolute inset-0 border border-[#6b6d73]" />
    </div>
  );
}
